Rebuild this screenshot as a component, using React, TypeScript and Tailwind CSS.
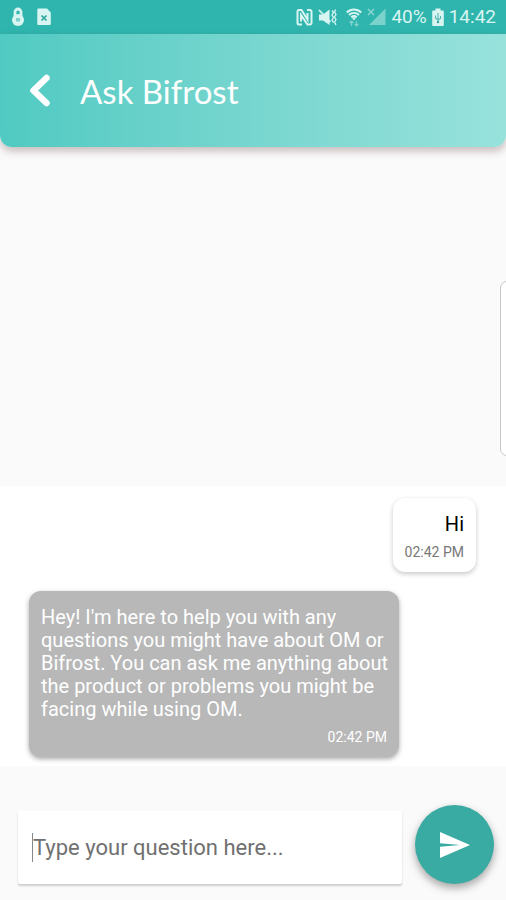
const STATUS_TINT = "#d9f5f2";

const MESSAGES = [
  { id: 1, from: "user", text: "Hi", time: "02:42 PM" },
  {
    id: 2,
    from: "bot",
    text: "Hey! I'm here to help you with any questions you might have about OM or Bifrost. You can ask me anything about the product or problems you might be facing while using OM.",
    time: "02:42 PM",
  },
];

const LockIcon = () => (
  <svg width="14" height="20" viewBox="0 0 14 20" aria-hidden>
    <path d="M4 9V5a3 3 0 0 1 6 0V9" fill="none" stroke={STATUS_TINT} strokeWidth="2.800" />
    <circle cx="7" cy="13" r="6" fill={STATUS_TINT} />
    <path d="M5 11h4v3.500H5z" fill="#7fd0ca" />
  </svg>
);

const FileIcon = () => (
  <svg width="14" height="18" viewBox="0 0 14 18" aria-hidden>
    <path d="M1.500 0.500H10L13.800 4.500V16a1 1 0 0 1-1 1h-11.500a1 1 0 0 1-1-1V1.500a1 1 0 0 1 1-1z" fill={STATUS_TINT} />
    <path d="M4.500 7.500l5 5M9.500 7.500l-5 5" stroke="#30a79f" strokeWidth="1.700" />
  </svg>
);

const NfcIcon = () => (
  <svg width="17" height="19" viewBox="0 0 17 19" aria-hidden>
    <path
      d="M6 16.500H3a1.500 1.500 0 0 1-1.500-1.500V3.500A1.500 1.500 0 0 1 3 2H5.500L11.500 11.500V5M11 2H14a1.500 1.500 0 0 1 1.500 1.500V15a1.500 1.500 0 0 1-1.500 1.500H11.500L5 7V13.500"
      fill="none"
      stroke={STATUS_TINT}
      strokeWidth="2"
    />
  </svg>
);

const MuteIcon = () => (
  <svg width="19" height="19" viewBox="0 0 19 19" aria-hidden>
    <path d="M1 6.500H5L11.500 1.500V17L5 12.500H1z" fill={STATUS_TINT} />
    <path d="M1 2L12.500 14" stroke={STATUS_TINT} strokeWidth="1.800" />
    <path
      d="M14 2.500l1.500 2-1.500 2.500 1.500 2.500-1.500 2.500 1.500 2.500M17.500 1.500L16.500 4l1.500 2.500-1.500 2.500 1.500 2.500-1.500 2.500 1.500 3"
      fill="none"
      stroke={STATUS_TINT}
      strokeWidth="1.300"
    />
  </svg>
);

const WifiIcon = () => (
  <svg width="16" height="19" viewBox="0 0 16 19" aria-hidden>
    <path
      d="M0.800 4.500c4.200-4 10.200-4 14.400 0M3 7c3-2.700 7-2.700 10 0M5.300 9.300c1.600-1.400 3.800-1.400 5.400 0"
      fill="none"
      stroke={STATUS_TINT}
      strokeWidth="2"
    />
    <path d="M5.800 9.500h4.400L8 12.500z" fill={STATUS_TINT} />
    <path d="M5.500 18v-5M3.500 15l2-2 2 2M10.500 13v5M8.500 16l2 2 2-2" fill="none" stroke="#7fd3cd" strokeWidth="1.200" />
  </svg>
);

const SignalIcon = () => (
  <svg width="19" height="18" viewBox="0 0 19 18" aria-hidden>
    <path d="M18.500 0.500V17H2z" fill="#7bd1cb" />
    <path d="M1 1l6 6M7 1L1 7" stroke="#8cd8d2" strokeWidth="1.400" />
  </svg>
);

const BatteryIcon = () => (
  <svg width="12" height="19" viewBox="0 0 12 19" aria-hidden>
    <path d="M3.500 0.500h5v2h2.300a1 1 0 0 1 1 1V17a1 1 0 0 1-1 1h-9.600a1 1 0 0 1-1-1V3.500a1 1 0 0 1 1-1H3.500z" fill={STATUS_TINT} />
    <path d="M6 5v8M3.500 7.500V10L6 12l2.500-1.500V8" fill="none" stroke="#55b9b2" strokeWidth="1.100" />
    <circle cx="6" cy="14" r="1.200" fill="#30a79f" />
  </svg>
);

const StatusBar = () => (
  <div className="flex h-[34px] items-center bg-[#30b5ae] pr-[10px] pl-[11px] text-[19px] text-[#d9f5f2]">
    <div className="flex items-center gap-3">
      <LockIcon />
      <FileIcon />
    </div>
    <div className="ml-auto flex items-center gap-[5px]">
      <NfcIcon />
      <MuteIcon />
      <div className="flex items-center gap-[5px] pl-1">
        <WifiIcon />
        <SignalIcon />
      </div>
      <span>40%</span>
      <BatteryIcon />
      <span>14:42</span>
    </div>
  </div>
);

const Header = () => (
  <header className="flex h-[113px] items-center rounded-b-xl bg-linear-to-r from-[#4fcac2] to-[#98e2dc] pl-7 shadow-[0_4px_8px_rgba(60,20,20,0.28)]">
    <button type="button" aria-label="Back" className="text-white">
      <svg width="24" height="34" viewBox="0 0 24 34" aria-hidden>
        <path
          d="M18.500 4L5.500 16.500L18.500 29"
          fill="none"
          stroke="currentColor"
          strokeWidth="6.500"
          strokeLinecap="round"
          strokeLinejoin="round"
        />
      </svg>
    </button>
    <h1 className="pl-7 font-['Lato',sans-serif] text-[33px] leading-10 text-white">Ask Bifrost</h1>
  </header>
);

const Message = ({ from, text, time }: { from: string; text: string; time: string }) => {
  const isUser = from === "user";

  return (
    <li
      className={
        isUser
          ? "self-end rounded-xl bg-white px-3 pt-[15px] pb-3 text-right text-black shadow-[0_2px_5px_rgba(0,0,0,0.22)]"
          : "max-w-[370px] self-start rounded-xl bg-[#b8b8b8] px-3 pt-[15px] pb-3 text-white shadow-[0_2px_5px_rgba(0,0,0,0.35)]"
      }
    >
      <p className={isUser ? "text-[20px] leading-[23px]" : "-mr-1 text-[20px] leading-[23px]"}>{text}</p>
      <time
        className={
          isUser
            ? "mt-2 block text-right text-[14px] leading-4 text-[#777777]"
            : "mt-2 block text-right text-[14px] leading-4 text-white"
        }
      >
        {time}
      </time>
    </li>
  );
};

const Composer = () => (
  <form className="flex items-end gap-[13px] pt-[39px] pr-3 pb-4 pl-[18px]" onSubmit={(e) => e.preventDefault()}>
    <label className="flex h-[73px] min-w-0 flex-1 items-center rounded-xs bg-white pl-[14px] shadow-[0_2px_2px_rgba(0,0,0,0.18)]">
      <span className="h-[29px] w-px bg-[#888888]" />
      <input
        type="text"
        aria-label="Your question"
        placeholder="Type your question here..."
        className="min-w-0 flex-1 bg-transparent text-[22px] outline-none placeholder:text-[#707070]"
      />
    </label>
    <button
      type="submit"
      aria-label="Send"
      className="flex size-[79px] shrink-0 items-center justify-center rounded-full bg-[#3aaba3] text-white shadow-[0_4px_8px_rgba(0,0,0,0.35)]"
    >
      <svg width="30" height="26" viewBox="0 0 30 26" aria-hidden>
        <path d="M0 0L30 13L0 26V14.800L20 13L0 11.200z" fill="currentColor" />
      </svg>
    </button>
  </form>
);

export default function App() {
  return (
    <div className="relative flex min-h-screen flex-col overflow-hidden bg-[#fafafa] font-['Roboto',sans-serif]">
      <StatusBar />
      <Header />
      <main className="flex flex-1 flex-col justify-end">
        <ul className="flex flex-col gap-[19px] bg-white pt-3 pr-[30px] pb-[9px] pl-[29px]">
          {MESSAGES.map((message) => (
            <Message key={message.id} from={message.from} text={message.text} time={message.time} />
          ))}
        </ul>
      </main>
      <Composer />
      {/* edge panel handle, mostly off screen */}
      <div className="absolute top-[281px] -right-2 h-[175px] w-[14px] rounded-lg border border-[#c8c8c8] bg-white" />
    </div>
  );
}
